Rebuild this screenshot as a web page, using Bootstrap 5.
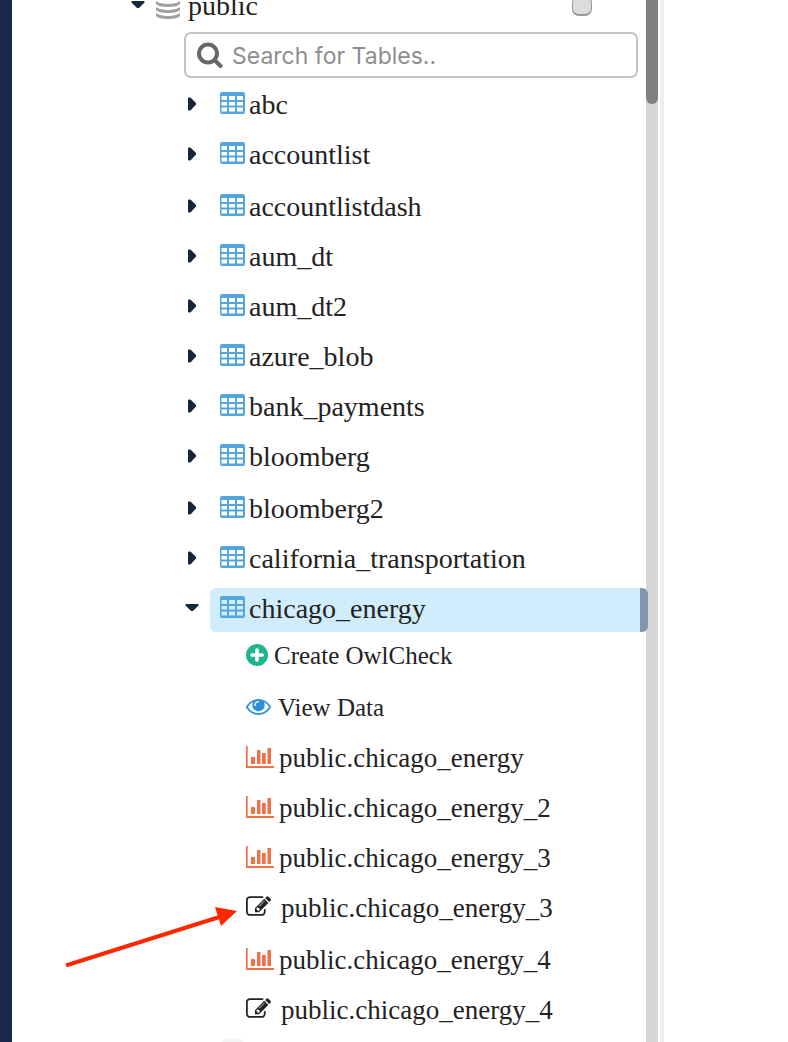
<!DOCTYPE html>
<html lang="en">
<head>
<meta charset="utf-8">
<meta name="viewport" content="width=device-width, initial-scale=1">
<title>Explorer</title>
<link rel="stylesheet" href="https://cdn.jsdelivr.net/npm/bootstrap@5.3.0/dist/css/bootstrap.min.css">
<style>
body{font-family:"Liberation Serif",serif;color:#222;background:#fff}
.rail{width:12px;background:#182b4d}
.explorer{padding-right:8px;min-width:0}
.track{width:12px;background:#d6d6d6}
.thumb{height:104px;background:#808080;border-radius:0 0 6px 6px}
.divider{width:4px;margin-left:2px;background:#eee}
.content-pane{width:124px}
svg{display:block;flex:none}
.node{height:44px;padding-bottom:4px;font-size:28px;line-height:32px;white-space:nowrap}
.node a{color:inherit;text-decoration:none}
.root-node{margin:-15px 0 3px 119px}
.root-node label{padding-top:2px}
.root-node input{width:20px;height:20px;margin:2px 46px 0 0;border:1px solid #999;border-bottom-width:2px;border-radius:4px;background-color:#dcdcdc}
.db-icon{margin:0 7px 0 11px}
.caret{width:14px;padding:0;border:0;background:none;color:#17263a}
.branch{margin-left:172px}
.search-box{height:46px;padding:0 11px;border:2px solid #c4c4c4;border-radius:7px}
.search-box input{font-family:Inter,sans-serif;font-size:23px;line-height:32px;color:#444;padding:2px 0 0 1px}
.search-box input::placeholder{color:#8e8e8e;opacity:1}
.tables{margin-top:6px}
.tables>li{margin-bottom:6px}
.tables>li:nth-child(6n+3){margin-top:8px}
.tables .caret{margin:0 11px 0 1px}
.tables .node>a{height:44px;padding:0 0 2px 10px;margin-bottom:-4px;gap:4px;border-radius:6px}
.node>a.current{position:relative;margin-right:-10px;background:#d1ecfa;border-right:8px solid #8295ae}
.tables svg.grid-icon{color:#53a5e0;margin-bottom:4px}
.actions{margin-left:62px;padding-top:3px}
.actions>li{position:relative;margin-bottom:6px}
.actions>li:nth-child(6n+1){margin-top:8px}
.actions>li:first-child{margin-top:-6px}
.actions>li:nth-child(2){margin-top:8px}
.actions .node{font-size:27px}
.actions .command{font-size:25px}
.actions a{padding-top:2px}
.plus-icon{margin-right:5px}
.eye-icon{margin-right:7px}
.chart-icon{color:#f07048;margin-right:5px}
.edit-icon{margin:0 10px 3px 0}
.pointer{position:absolute;top:18px;right:calc(100% + 9px)}
.loading{width:21px;height:22px;margin:2px 0 0 38px;background:#f5f5f5;border-radius:3px}
</style>
</head>
<body class="d-flex vh-100 overflow-hidden">
<svg width="0" height="0" class="position-absolute" aria-hidden="true">
<symbol id="right" viewBox="0 0 14 14"><path d="M4 .5h1.500L11 6v1.600L5.500 13.500H4Q3 13.500 3 12.500v-11Q3 .5 4 .5z" fill="currentColor"/></symbol>
<symbol id="down" viewBox="0 0 14 14"><path d="M1.500 3h11q1.500 0 1 1.500L8 10H6L.5 4.500Q0 3 1.500 3z" fill="currentColor"/></symbol>
<symbol id="grid" viewBox="0 0 25 22"><path fill="currentColor" fill-rule="evenodd" d="M2 0h21q2 0 2 2v18q0 2-2 2H2q-2 0-2-2V2Q0 0 2 0zM1.500 4v4H7V4zM9 4v4h6V4zM17 4v4h6V4zM1.500 10v3.500H7V10zM9 10v3.500h6V10zM17 10v3.500h6V10zM1.500 15.500v4H7v-4zM9 15.500v4h6v-4zM17 15.500v4h6v-4z"/></symbol>
<symbol id="chart" viewBox="0 0 28 22"><path fill="currentColor" d="M0 0h1.700v20H28v2H0zM5 11h4v7H5zM11 4h3.500v14H11zM16 7h3.700v11H16zM21.500 2H25v16h-3.500z"/></symbol>
<symbol id="edit" viewBox="0 128 1792 1408"><path fill="currentColor" d="M888 1184l116-116-152-152-116 116v56h96v96h56zm440-720q-16-16-33 1l-350 350q-17 17-1 33t33-1l350-350q17-17 1-33zm80 594v190q0 119-84.500 203.500t-203.500 84.500h-832q-119 0-203.500-84.500t-84.500-203.500v-832q0-119 84.500-203.500t203.500-84.500h832q63 0 117 25 15 7 18 23 3 17-9 29l-49 49q-14 14-32 8-23-6-45-6h-832q-66 0-113 47t-47 113v832q0 66 47 113t113 47h832q66 0 113-47t47-113v-126q0-13 9-22l64-64q15-15 35-7t20 29zm-96-738l288 288-672 672h-288v-288zm444 132l-92 92-288-288 92-92q28-28 68-28t68 28l152 152q28 28 28 68t-28 68z"/></symbol>
</svg>

<div class="rail flex-shrink-0"></div>
<main class="explorer flex-grow-1">
  <div class="node root-node d-flex align-items-center">
    <button class="caret" aria-label="Collapse public"><svg width="14" height="14"><use href="#down"/></svg></button>
    <svg class="db-icon" width="25" height="27" viewBox="0 0 25 27" fill="#a0a0a0"><ellipse cx="12" cy="4" rx="12" ry="4"/><path d="M0 9q4 3 12 3t12-3v3q-2 3-12 3T0 12zM0 15q4 3 12 3t12-3v3q-2 3-12 3T0 18zM0 21q4 3 12 3t12-3v3q-2 3-12 3T0 24z"/></svg>
    <label for="pick-public">public</label>
    <input class="form-check-input ms-auto" type="checkbox" id="pick-public">
  </div>

  <div class="branch">
    <div class="search-box d-flex align-items-center">
      <label for="table-search" class="me-2" aria-label="Search"><svg width="26" height="26" viewBox="0 0 26 26" fill="none" stroke="#686868" stroke-width="4"><circle cx="11" cy="11.500" r="9"/><path d="M17.500 18l6 6" stroke-linecap="round"/></svg></label>
      <input id="table-search" class="form-control border-0 shadow-none bg-transparent" type="text" placeholder="Search for Tables..">
    </div>

    <ul class="tables list-unstyled mb-0">
      <li><div class="node d-flex align-items-center"><button class="caret" aria-label="Expand abc"><svg width="14" height="14"><use href="#right"/></svg></button><a href="#" class="d-flex align-items-center flex-grow-1"><svg class="grid-icon" width="25" height="22"><use href="#grid"/></svg>abc</a></div></li>
      <li><div class="node d-flex align-items-center"><button class="caret" aria-label="Expand accountlist"><svg width="14" height="14"><use href="#right"/></svg></button><a href="#" class="d-flex align-items-center flex-grow-1"><svg class="grid-icon" width="25" height="22"><use href="#grid"/></svg>accountlist</a></div></li>
      <li><div class="node d-flex align-items-center"><button class="caret" aria-label="Expand accountlistdash"><svg width="14" height="14"><use href="#right"/></svg></button><a href="#" class="d-flex align-items-center flex-grow-1"><svg class="grid-icon" width="25" height="22"><use href="#grid"/></svg>accountlistdash</a></div></li>
      <li><div class="node d-flex align-items-center"><button class="caret" aria-label="Expand aum_dt"><svg width="14" height="14"><use href="#right"/></svg></button><a href="#" class="d-flex align-items-center flex-grow-1"><svg class="grid-icon" width="25" height="22"><use href="#grid"/></svg>aum_dt</a></div></li>
      <li><div class="node d-flex align-items-center"><button class="caret" aria-label="Expand aum_dt2"><svg width="14" height="14"><use href="#right"/></svg></button><a href="#" class="d-flex align-items-center flex-grow-1"><svg class="grid-icon" width="25" height="22"><use href="#grid"/></svg>aum_dt2</a></div></li>
      <li><div class="node d-flex align-items-center"><button class="caret" aria-label="Expand azure_blob"><svg width="14" height="14"><use href="#right"/></svg></button><a href="#" class="d-flex align-items-center flex-grow-1"><svg class="grid-icon" width="25" height="22"><use href="#grid"/></svg>azure_blob</a></div></li>
      <li><div class="node d-flex align-items-center"><button class="caret" aria-label="Expand bank_payments"><svg width="14" height="14"><use href="#right"/></svg></button><a href="#" class="d-flex align-items-center flex-grow-1"><svg class="grid-icon" width="25" height="22"><use href="#grid"/></svg>bank_payments</a></div></li>
      <li><div class="node d-flex align-items-center"><button class="caret" aria-label="Expand bloomberg"><svg width="14" height="14"><use href="#right"/></svg></button><a href="#" class="d-flex align-items-center flex-grow-1"><svg class="grid-icon" width="25" height="22"><use href="#grid"/></svg>bloomberg</a></div></li>
      <li><div class="node d-flex align-items-center"><button class="caret" aria-label="Expand bloomberg2"><svg width="14" height="14"><use href="#right"/></svg></button><a href="#" class="d-flex align-items-center flex-grow-1"><svg class="grid-icon" width="25" height="22"><use href="#grid"/></svg>bloomberg2</a></div></li>
      <li><div class="node d-flex align-items-center"><button class="caret" aria-label="Expand california_transportation"><svg width="14" height="14"><use href="#right"/></svg></button><a href="#" class="d-flex align-items-center flex-grow-1"><svg class="grid-icon" width="25" height="22"><use href="#grid"/></svg>california_transportation</a></div></li>
      <li><div class="node d-flex align-items-center"><button class="caret" aria-label="Collapse chicago_energy"><svg width="14" height="14"><use href="#down"/></svg></button><a href="#" class="current d-flex align-items-center flex-grow-1" aria-current="true"><svg class="grid-icon" width="25" height="22"><use href="#grid"/></svg>chicago_energy</a></div></li>
    </ul>

    <ul class="actions list-unstyled mb-0">
      <li class="node command d-flex align-items-center"><svg class="plus-icon" width="23" height="22" viewBox="0 0 23 22"><circle cx="11" cy="11" r="11" fill="#1db58e"/><path d="M11 6v10M6 11h10" stroke="#fff" stroke-width="3.700" stroke-linecap="round"/></svg><a href="#">Create OwlCheck</a></li>
      <li class="node command d-flex align-items-center"><svg class="eye-icon" width="25" height="16" viewBox="0 384 1792 1152"><path fill="#2f8fdc" d="M1664 960q-152-236-381-353 61 104 61 225 0 185-131.500 316.500t-316.500 131.500-316.500-131.500-131.500-316.500q0-121 61-225-229 117-381 353 133 205 333.500 326.500t434.500 121.500 434.500-121.500 333.500-326.500zm-720-384q0-20-14-34t-34-14q-125 0-214.500 89.500t-89.500 214.500q0 20 14 34t34 14 34-14 14-34q0-86 61-147t147-61q20 0 34-14t14-34zm848 384q0 34-20 69-140 230-376.500 368.500t-499.500 138.500-499.500-139-376.500-368q-20-35-20-69t20-69q140-229 376.500-368t499.500-139 499.500 139 376.500 368q20 35 20 69z"/></svg><a href="#">View Data</a></li>
      <li class="node d-flex align-items-center"><svg class="chart-icon" width="28" height="22"><use href="#chart"/></svg><a href="#">public.chicago_energy</a></li>
      <li class="node d-flex align-items-center"><svg class="chart-icon" width="28" height="22"><use href="#chart"/></svg><a href="#">public.chicago_energy_2</a></li>
      <li class="node d-flex align-items-center"><svg class="chart-icon" width="28" height="22"><use href="#chart"/></svg><a href="#">public.chicago_energy_3</a></li>
      <li class="node d-flex align-items-center"><svg class="pointer" width="172" height="62" viewBox="0 0 172 62" aria-hidden="true"><path d="M1 60.500L156 11.500" stroke="#ff2600" stroke-width="4"/><path d="M172 6L150 2l6 19z" fill="#ff2600"/></svg><svg class="edit-icon" width="25" height="20"><use href="#edit"/></svg><a href="#">public.chicago_energy_3</a></li>
      <li class="node d-flex align-items-center"><svg class="chart-icon" width="28" height="22"><use href="#chart"/></svg><a href="#">public.chicago_energy_4</a></li>
      <li class="node d-flex align-items-center"><svg class="edit-icon" width="25" height="20"><use href="#edit"/></svg><a href="#">public.chicago_energy_4</a></li>
    </ul>
    <div class="loading"></div>
  </div>
</main>
<div class="track flex-shrink-0"><div class="thumb"></div></div>
<div class="divider flex-shrink-0"></div>
<aside class="content-pane flex-shrink-0"></aside>
<script src="https://cdn.jsdelivr.net/npm/bootstrap@5.3.0/dist/js/bootstrap.bundle.min.js"></script>
</body>
</html>
